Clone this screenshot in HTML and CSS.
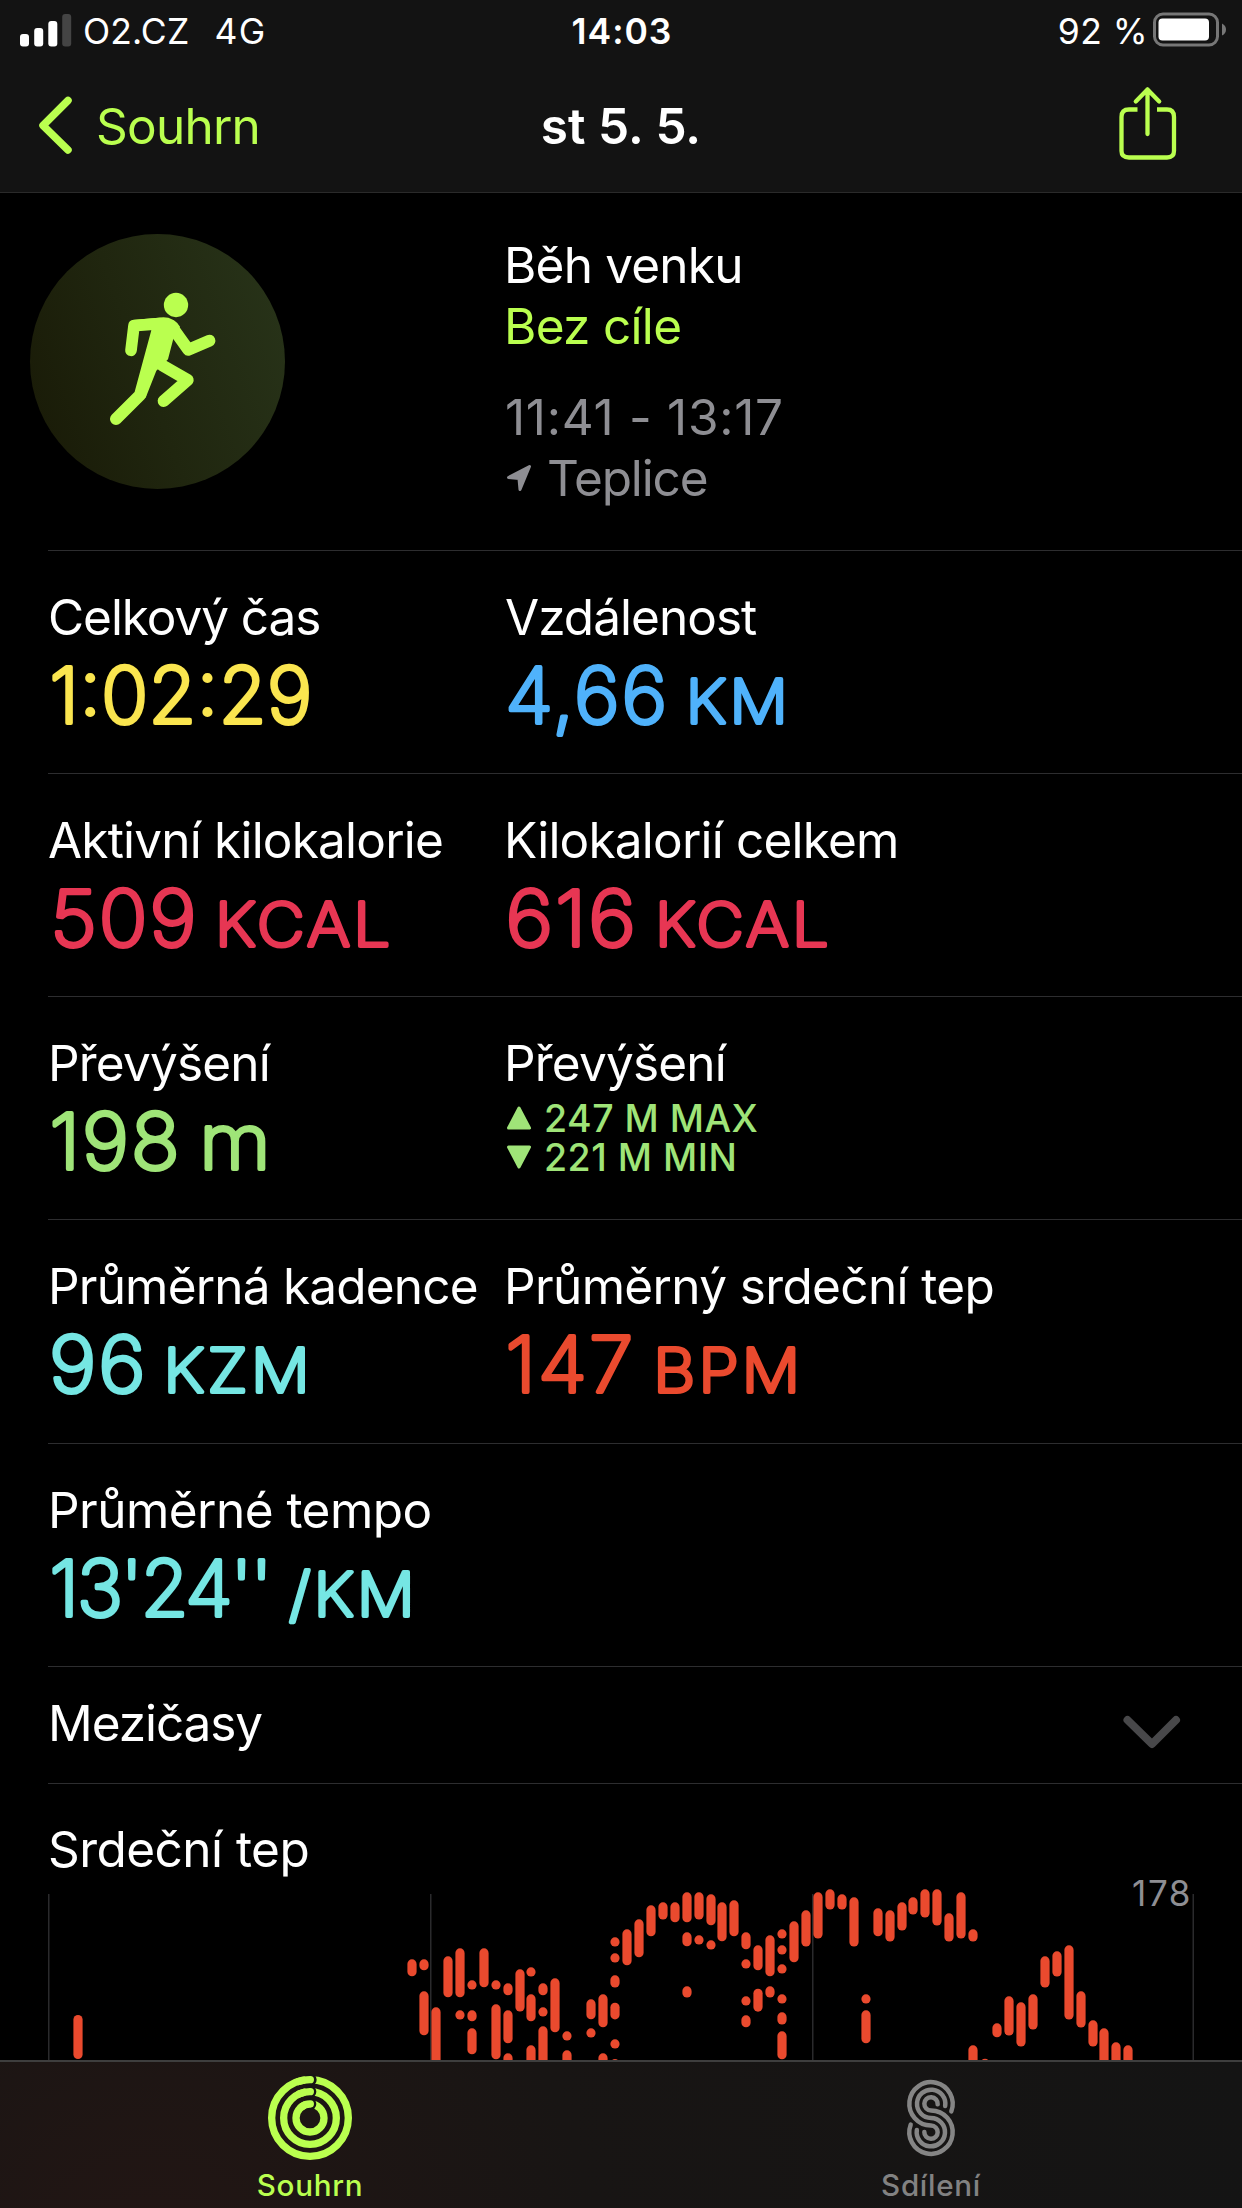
FILE: index.html
```
<!DOCTYPE html>
<html lang="cs">
<head>
<meta charset="utf-8">
<title>st 5. 5.</title>
<link rel="stylesheet" href="styles.css">
</head>
<body>
<header class="top">
  <div class="status">
    <div class="status-left">
      <svg class="signal" width="52" height="34" viewBox="0 0 52 34">
        <rect x="0" y="21" width="9" height="12.5" rx="3"/>
        <rect x="14.2" y="15" width="9" height="18.5" rx="3"/>
        <rect x="28.3" y="8" width="9" height="25.5" rx="3"/>
        <rect class="off" x="42.2" y="1" width="9" height="32.5" rx="3"/>
      </svg>
      <span class="carrier">O2.CZ</span>
      <span class="network">4G</span>
    </div>
    <div class="clock">14:03</div>
    <div class="status-right">
      <span>92 %</span>
      <svg class="battery" width="74" height="36" viewBox="0 0 74 36">
        <rect class="shell" x="1.5" y="2" width="63" height="31" rx="8.5"/>
        <rect class="charge" x="5.5" y="6.5" width="50.5" height="22" rx="4"/>
        <path class="nub" d="M69 11.5Q73 13.5 73 17.5T69 23.500z"/>
      </svg>
    </div>
  </div>
  <nav class="nav">
    <a class="back">
      <svg width="36" height="60" viewBox="0 0 36 60"><path d="M30 4.500L5 29.500L30 54"/></svg>
      <span>Souhrn</span>
    </a>
    <h1 class="title">st 5. 5.</h1>
    <div class="share">
      <svg width="60" height="78" viewBox="0 0 60 78">
        <path d="M20.500 24.500H12Q4.500 24.500 4.500 32V66Q4.500 72.500 12 72.500H50Q57 72.500 57 66V32Q57 24.500 50 24.500H40"/>
        <path class="arrow" d="M30.500 49V4.500M18.800 16.500L30.500 4.500L42.200 16.500"/>
      </svg>
    </div>
  </nav>
</header>

<main class="content">
  <section class="summary">
    <div class="badge">
      <svg viewBox="90 72 765 765">
        <circle cx="528" cy="285" r="36.500"/>
        <path class="limb arm" d="M393 421L402 347L480 341"/>
        <path class="limb" d="M514 348L565 419L628 392"/>
        <path class="torso" d="M400 330L490 321.500Q522 321.500 540 350L520 386L504 448L469 482L437 563L404 545L454 361Z"/>
        <path class="limb" d="M487 466L563 510L491 573"/>
        <path class="limb" d="M421 554L348 627"/>
      </svg>
    </div>
    <div class="summary-text">
      <div class="line">Běh venku</div>
      <div class="line goal">Bez cíle</div>
      <div class="line time">11:41 - 13:17</div>
      <div class="line place">
        <svg width="26" height="28" viewBox="0 0 26 28"><path d="M2.500 13.500L23.500 2.500L14 25.500L13 14.500Z"/></svg>
        <span>Teplice</span>
      </div>
    </div>
  </section>

  <section class="row">
    <div class="cell">
      <div class="label tight">Celkový čas</div>
      <svg class="value yellow" width="440" height="100"><text class="plain" x="1.600" y="75" textLength="262.500">1:02:29</text></svg>
    </div>
    <div class="cell">
      <div class="label snug shift">Vzdálenost</div>
      <svg class="value blue" width="440" height="100"><text x="1.200" y="75" textLength="164" lengthAdjust="spacingAndGlyphs">4,66</text><text class="unit" x="181.800" y="75" textLength="105.400" lengthAdjust="spacingAndGlyphs">KM</text></svg>
    </div>
  </section>

  <section class="row">
    <div class="cell">
      <div class="label">Aktivní kilokalorie</div>
      <svg class="value pink" width="440" height="100"><text x="2.200" y="75" textLength="148.400" lengthAdjust="spacingAndGlyphs">509</text><text class="unit" x="167.100" y="75" textLength="178.400" lengthAdjust="spacingAndGlyphs">KCAL</text></svg>
    </div>
    <div class="cell">
      <div class="label">Kilokalorií celkem</div>
      <svg class="value pink" width="440" height="100"><text x="1.500" y="75" textLength="132.500" lengthAdjust="spacingAndGlyphs">616</text><text class="unit" x="150.900" y="75" textLength="176.900" lengthAdjust="spacingAndGlyphs">KCAL</text></svg>
    </div>
  </section>

  <section class="row">
    <div class="cell">
      <div class="label">Převýšení</div>
      <svg class="value green" width="440" height="100"><text x="1.400" y="75" textLength="132.200" lengthAdjust="spacingAndGlyphs">198</text><text x="151.300" y="75" textLength="73.500" lengthAdjust="spacingAndGlyphs">m</text></svg>
    </div>
    <div class="cell">
      <div class="label">Převýšení</div>
      <div class="range">
        <div class="range-line"><svg width="26" height="26" viewBox="0 0 26 26"><path d="M13 3L23.500 23H2.500Z"/></svg><span>247 M MAX</span></div>
        <div class="range-line min"><svg width="26" height="26" viewBox="0 0 26 26"><path d="M13 23L23.500 3H2.500Z"/></svg><span>221 M MIN</span></div>
      </div>
    </div>
  </section>

  <section class="row tall">
    <div class="cell">
      <div class="label">Průměrná kadence</div>
      <svg class="value cyan" width="440" height="100"><text x="1" y="75" textLength="98.700" lengthAdjust="spacingAndGlyphs">96</text><text class="unit" x="115.600" y="75" textLength="149.400" lengthAdjust="spacingAndGlyphs">KZM</text></svg>
    </div>
    <div class="cell">
      <div class="label loose">Průměrný srdeční tep</div>
      <svg class="value red" width="440" height="100"><text x="1.500" y="75" textLength="129.800" lengthAdjust="spacingAndGlyphs">147</text><text class="unit" x="149.300" y="75" textLength="150" lengthAdjust="spacingAndGlyphs">BPM</text></svg>
    </div>
  </section>

  <section class="row">
    <div class="cell">
      <div class="label looser">Průměrné tempo</div>
      <svg class="value cyan" width="440" height="100"><text class="plain" x="1.500" y="75" textLength="222.900">13'24''</text><text class="unit" x="241" y="75" textLength="128.800" lengthAdjust="spacingAndGlyphs">/KM</text></svg>
    </div>
  </section>

  <section class="splits">
    <div class="label tight">Mezičasy</div>
    <svg width="60" height="36" viewBox="0 0 60 36"><path d="M5.500 5L30 29L54 5"/></svg>
  </section>

  <section class="heart">
    <div class="label looser">Srdeční tep</div>
    <svg class="chart" width="1242" height="181" viewBox="0 1880 1242 181">
      <g class="grid"></g>
      <g class="bars"></g>
      <text x="1132" y="1906" textLength="58.500">178</text>
    </svg>
  </section>
</main>

<footer class="tabs">
  <div class="tab active">
    <svg width="88" height="88" viewBox="198 72 264 264">
      <g class="ring"><circle cx="330" cy="204" r="115"/><circle cx="330" cy="204" r="79"/><circle cx="330" cy="204" r="42"/></g>
      <g class="gap"><circle cx="331" cy="89" r="19"/><circle cx="331" cy="125" r="18"/><circle cx="331" cy="162" r="18"/></g>
      <g class="ring"><path d="M295 94.500A115 115 0 0 1 331 89"/><path d="M298 131.700A79 79 0 0 1 331 125"/><path d="M304 171A42 42 0 0 1 331 162"/></g>
    </svg>
    <span>Souhrn</span>
  </div>
  <div class="tab share-tab">
    <svg width="88" height="88" viewBox="201 72 264 264">
      <path d="M394 184A65 65 0 1 0 333 226.500A20 20 0 1 1 313 246"/>
      <path d="M375.500 168A42.500 42.500 0 1 0 333 204A42.500 42.500 0 1 1 290.500 240"/>
      <path d="M353 163A20 20 0 1 0 333 181.500A65 65 0 1 1 272 224"/>
    </svg>
    <span>Sdílení</span>
  </div>
</footer>
<script src="chart.js"></script>
</body>
</html>
```
FILE: styles.css
```
* { box-sizing: border-box; }
html { background: #000; }
body {
  margin: 0;
  width: 1242px;
  height: 2208px;
  display: flex;
  flex-direction: column;
  overflow: hidden;
  background: #000;
  color: #fff;
  font-family: Inter, "Liberation Sans", sans-serif;
  font-size: 49.5px;
  line-height: 61px;
  white-space: nowrap;
}
svg { display: block; flex: none; }

/* Header */
.top { height: 193px; flex: none; background: #131313; border-bottom: 1px solid #2a2a2a; }
.status {
  height: 60px;
  display: grid;
  grid-template-columns: 1fr auto 1fr;
  padding: 2px 15px 0 20px;
  font-size: 35.5px;
  line-height: 60px;
}
.status-left { display: flex; }
.signal { fill: #fff; margin: 11px 11px 0 0; }
.signal .off { fill: #444; }
.carrier { letter-spacing: 0.13px; margin-right: 25px; }
.network { letter-spacing: 1.5px; }
.clock { font-weight: 600; letter-spacing: 0.98px; padding-right: 3px; }
.status-right { display: flex; justify-content: flex-end; gap: 5px; letter-spacing: 0.45px; }
.battery { margin-top: 10px; }
.shell { fill: none; stroke: #777; stroke-width: 3; }
.charge { fill: #fff; }
.nub { fill: #777; }
.nav {
  height: 132px;
  display: grid;
  grid-template-columns: 1fr auto 1fr;
  align-items: center;
  padding: 0 65px 0 38px;
}
.back { display: flex; align-items: center; gap: 22px; color: #baff4f; letter-spacing: -0.76px; }
.back svg { fill: none; stroke: #baff4f; stroke-width: 7.5; stroke-linecap: round; stroke-linejoin: round; }
.title { margin: 0; padding-left: 27px; font-size: 49.5px; font-weight: 600; letter-spacing: 0.05px; }
.share { display: flex; justify-content: flex-end; }
.share svg { fill: none; stroke: #baff4f; stroke-width: 4.3; margin-top: -4px; }
.share .arrow { stroke-linecap: round; stroke-linejoin: round; }

/* Scrolling content */
.content { flex: 1; min-height: 0; overflow: hidden; }
.summary {
  height: 357px;
  display: grid;
  grid-template-columns: 474px 1fr;
  padding: 41px 0 0 30px;
}
.badge {
  width: 255px;
  height: 255px;
  border-radius: 50%;
  background: linear-gradient(70deg, #1a1c08 10%, #20260f 45%, #273218 90%);
}
.badge svg { width: 255px; height: 255px; fill: #baff4f; }
.limb { fill: none; stroke: #baff4f; stroke-width: 36; stroke-linecap: round; stroke-linejoin: round; }
.arm { stroke-width: 35; }
.summary-text { padding-top: 1px; letter-spacing: -0.8px; }
.goal { color: #baff4f; letter-spacing: -0.7px; }
.time { margin-top: 30px; padding-left: 1px; color: #8e8e93; letter-spacing: 0.72px; }
.place { display: flex; gap: 15px; color: #8e8e93; letter-spacing: -1.13px; }
.place svg { margin: 16px 0 0 2px; fill: #8e8e93; stroke: #8e8e93; stroke-width: 3; stroke-linejoin: round; }

.row {
  height: 223px;
  margin-left: 48px;
  padding-top: 36px;
  border-top: 1px solid #2d2d2f;
  display: grid;
  grid-template-columns: 456px 1fr;
}
.row.tall { height: 224px; }
.label { letter-spacing: -0.8px; }
.label.tight { letter-spacing: -1.07px; }
.label.snug { letter-spacing: -0.97px; }
.label.loose { letter-spacing: -0.63px; }
.label.looser { letter-spacing: -0.53px; }
.shift { padding-left: 1px; }

/* Rounded numerals: a light face thickened by a round-joined stroke */
.value {
  overflow: visible;
  font-size: 77.5px;
  font-weight: 200;
  letter-spacing: 2px;
  fill: currentColor;
  stroke: currentColor;
  stroke-width: 4;
  stroke-linejoin: round;
  stroke-linecap: round;
}
.value .plain { letter-spacing: 0; }
.value .unit { font-size: 60px; letter-spacing: 3px; }
.yellow { color: #fae54f; }
.blue { color: #4fb2fb; }
.pink { color: #e73653; }
.green { color: #9fe478; }
.cyan { color: #75e6e3; }
.red { color: #ea4a2e; }

.range { padding-top: 5px; color: #9fe478; font-size: 37.5px; font-weight: 500; line-height: 39px; letter-spacing: 0.5px; }
.range-line { display: flex; gap: 12px; }
.range-line svg { margin: 6px 0 0 2px; fill: #9fe478; stroke: #9fe478; stroke-width: 3; stroke-linejoin: round; }

.splits {
  height: 117px;
  margin-left: 48px;
  padding: 26px 60px 0 0;
  border-top: 1px solid #2d2d2f;
  display: flex;
  justify-content: space-between;
}
.splits svg { margin-top: 22px; fill: none; stroke: #48484a; stroke-width: 8; stroke-linecap: round; stroke-linejoin: round; }
.heart { margin-left: 48px; padding-top: 35px; border-top: 1px solid #2d2d2f; }
.chart { margin-left: -48px; overflow: visible; fill: #8e8e93; font-size: 35px; }
.grid { fill: #2a2a2c; }
.bars { fill: #ea4a2e; }

/* Tab bar */
.tabs {
  height: 148px;
  flex: none;
  border-top: 2px solid #3e3e3e;
  background: radial-gradient(circle at 12% 150%, #231614 0, #181514 40%, #141414 100%);
  display: grid;
  grid-template-columns: 1fr 1fr;
  font-size: 29.6px;
  font-weight: 500;
  line-height: 36px;
  letter-spacing: 0.7px;
}
.tab { display: flex; flex-direction: column; align-items: center; padding: 12px 1px 0 0; }
.tab span { margin-top: 5px; }
.active { color: #baff4f; }
.ring { fill: none; stroke: #baff4f; stroke-width: 22; stroke-linecap: round; }
.gap { fill: #171514; }
.share-tab { color: #828282; }
.share-tab svg { fill: none; stroke: #858585; stroke-width: 13.500; stroke-linecap: round; }
```
FILE: chart.js
```
// Heart-rate ranges: [centre x, [top, bottom], ...]
const left = [
  [96, [298, 349]], [132, [298, 331], [394, 526]], [168, [442, 630]], [204, [289, 412]],
  [240, [265, 412], [451, 479]], [276, [361, 389], [451, 484], [505, 583]], [312, [265, 382]],
  [348, [361, 389], [433, 598]], [384, [370, 406], [451, 550], [580, 630]], [420, [328, 455]],
  [453, [322, 350], [403, 484], [556, 630]], [489, [370, 406], [442, 470], [499, 630]],
  [525, [355, 517]], [561, [514, 542], [571, 630]], [633, [418, 478], [505, 533]],
  [669, [403, 502], [580, 630]], [705, [232, 260], [280, 308], [346, 383], [428, 478], [538, 566], [597, 630]],
  [741, [208, 316]], [777, [178, 292]], [813, [136, 229]], [849, [127, 179]], [885, [127, 187]],
  [921, [97, 187], [217, 259], [379, 413]], [957, [97, 179], [226, 254]], [993, [103, 196], [241, 269]],
  [1026, [127, 244]], [1062, [121, 229]], [1098, [217, 268], [298, 326], [409, 437], [466, 502]],
  [1134, [256, 331], [386, 455]], [1170, [226, 349], [379, 413]],
  [1206, [208, 236], [256, 284], [313, 341], [403, 431], [457, 494], [514, 598]],
  [1242, [184, 307]], [1278, [151, 260]]
];
const right = [
  [54, [97, 236]], [90, [88, 149]], [126, [103, 149]], [162, [112, 260]], [198, [403, 431], [451, 550]],
  [234, [145, 229]], [270, [151, 245]], [306, [127, 212]], [339, [112, 164]], [375, [88, 173]],
  [411, [88, 197]], [447, [160, 245]], [483, [97, 236]], [519, [208, 245], [556, 630]], [555, [596, 630]],
  [591, [490, 532]], [627, [409, 527]], [663, [427, 560]], [699, [403, 509]], [735, [289, 383]],
  [771, [274, 350]], [807, [256, 479]], [843, [394, 503]], [879, [481, 560]], [912, [505, 630]],
  [948, [547, 630]], [984, [556, 630]]
];

const rect = (x, y, w, h, r) =>
  `<rect x="${x.toFixed(1)}" y="${y.toFixed(1)}" width="${w}" height="${h.toFixed(1)}" rx="${r}"/>`;

const bars = [rect(73.4, 2015, 9.2, 44, 4.6)];
for (const [origin, columns] of [[380, left], [800, right]]) {
  for (const [cx, ...ranges] of columns) {
    for (const [top, bottom] of ranges) {
      bars.push(rect(origin + cx / 3 - 4.6, 1860 + top / 3, 9.2, (bottom - top) / 3, 4.6));
    }
  }
}
document.querySelector('.bars').innerHTML = bars.join('');
document.querySelector('.grid').innerHTML =
  [48, 430, 812, 1192.5].map(x => rect(x, 1894, 1.5, 170, 0)).join('');
```
